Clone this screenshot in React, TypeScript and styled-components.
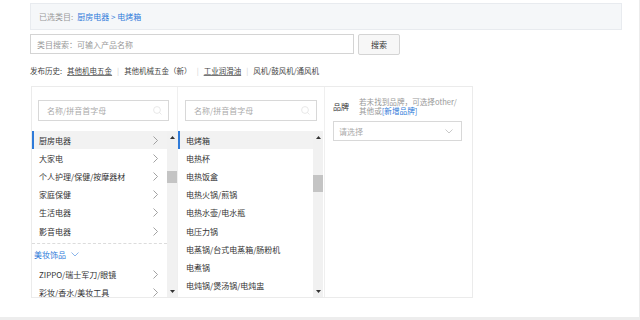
import React from "react";
import styled, { createGlobalStyle } from "styled-components";

const GlobalStyle = createGlobalStyle`
  html, body { margin: 0; padding: 0; background: #fff; }
  body {
    font-family: "Noto Sans CJK SC", "Noto Sans", sans-serif;
    font-size: 8px;
    color: #333;
  }
  * { box-sizing: border-box; }
`;

const Page = styled.div`
  width: 640px;
  height: 320px;
  display: flex;
  flex-direction: column;
  overflow: hidden;
`;

const Main = styled.div`
  flex: 1;
  border-right: 1px solid #ececec;
  padding: 3px 0 0 30px;
  display: flex;
  flex-direction: column;
`;

const FooterStrip = styled.div`
  height: 3px;
  background: #ededed;
`;

const SelectedBar = styled.div`
  width: 592px;
  height: 27px;
  background: #f5f7f9;
  border: 1px solid #e8ebef;
  display: flex;
  align-items: center;
  padding-left: 8px;
  line-height: 1;
`;

const Muted = styled.span`
  color: #999;
  margin-right: 4px;
`;

const Link = styled.span`
  color: #2f7bd9;
`;

const SearchRow = styled.div`
  margin-top: 4px;
  display: flex;
  gap: 4px;
  align-items: flex-start;
`;

const SearchInput = styled.div`
  width: 324px;
  height: 20px;
  border: 1px solid #d4d4d4;
  color: #999;
  display: flex;
  align-items: center;
  padding-left: 6px;
`;

const SearchButton = styled.div`
  width: 42px;
  height: 21px;
  border: 1px solid #d4d4d4;
  border-radius: 2px;
  background: #f7f7f7;
  display: flex;
  align-items: center;
  justify-content: center;
  color: #333;
`;

const HistoryRow = styled.div`
  margin-top: 8px;
  height: 14px;
  display: flex;
  align-items: center;
  white-space: nowrap;
  color: #444;
  font-size: 7.5px;
`;

const HistoryLabel = styled.span`
  margin-right: 5px;
`;

const HistoryItem = styled.span<{ $underline?: boolean }>`
  text-decoration: ${(p) => (p.$underline ? "underline" : "none")};
  text-decoration-color: #777;
`;

const Sep = styled.span`
  color: #d0d0d0;
  margin: 0 5px;
`;

const Panel = styled.div`
  margin-top: 9px;
  margin-left: 1px;
  width: 442px;
  height: 212px;
  border: 1px solid #ebebeb;
  display: flex;
`;

const Column = styled.div<{ $width?: number }>`
  width: ${(p) => (p.$width ? `${p.$width}px` : "auto")};
  flex: ${(p) => (p.$width ? "none" : "1")};
  border-right: ${(p) => (p.$width ? "1px solid #efefef" : "none")};
  display: flex;
  flex-direction: column;
  overflow: hidden;
`;

const FilterBox = styled.div<{ $left: number; $width: number }>`
  margin: 13px 0 0 ${(p) => p.$left}px;
  width: ${(p) => p.$width}px;
  height: 21px;
  border: 1px solid #d8d8d8;
  display: flex;
  align-items: center;
  justify-content: space-between;
  padding: 0 6px 0 8px;
  color: #aaa;
`;

const ListArea = styled.div`
  margin-top: 10px;
  flex: 1;
  display: flex;
  overflow: hidden;
`;

const List = styled.div`
  width: 135px;
  display: flex;
  flex-direction: column;
  overflow: hidden;
`;

const Row = styled.div<{ $active?: boolean; $pad: number }>`
  flex: none;
  height: 18.2px;
  display: flex;
  align-items: center;
  justify-content: space-between;
  padding: 0 9px 0 ${(p) => p.$pad}px;
  white-space: nowrap;
  background: ${(p) => (p.$active ? "#f2f2f2" : "#fff")};
  border-left: 2px solid ${(p) => (p.$active ? "#2f7bd9" : "transparent")};
  color: #333;
`;

const DashedSep = styled.div`
  flex: none;
  margin-top: 3px;
  border-top: 1px dashed #dcdcdc;
`;

const GroupHeader = styled.div`
  flex: none;
  height: 21px;
  display: flex;
  align-items: center;
  gap: 5px;
  padding-left: 2px;
  color: #2f7bd9;
`;

const Scrollbar = styled.div`
  width: 10px;
  background: #f1f1f1;
  display: flex;
  flex-direction: column;
  align-items: center;
`;

const ArrowCell = styled.div`
  height: 12px;
  width: 10px;
  display: flex;
  align-items: center;
  justify-content: center;
`;

const Thumb = styled.div<{ $top: number; $height: number }>`
  margin-top: ${(p) => p.$top}px;
  width: 10px;
  height: ${(p) => p.$height}px;
  background: #c4c4c4;
`;

const Spacer = styled.div`
  flex: 1;
`;

const BrandArea = styled.div`
  padding: 11px 0 0 8px;
  display: flex;
  flex-direction: column;
`;

const BrandHead = styled.div`
  display: flex;
  align-items: flex-start;
`;

const BrandLabel = styled.span`
  color: #333;
  margin-top: 3px;
  width: 26px;
`;

const BrandNote = styled.div`
  display: flex;
  flex-direction: column;
  color: #999;
  font-size: 7.6px;
  white-space: nowrap;
`;

const NoteLine = styled.div`
  height: 8.5px;
  line-height: 8.5px;
  display: flex;
  align-items: center;
`;

const SelectBox = styled.div`
  margin-top: 6px;
  width: 129px;
  height: 20px;
  border: 1px solid #d8d8d8;
  display: flex;
  align-items: center;
  justify-content: space-between;
  padding: 0 8px 0 5px;
  color: #aaa;
`;

const Chevron = () => (
  <svg width="5" height="9" viewBox="0 0 5 9">
    <polyline points="0.5,0.5 4.5,4.5 0.5,8.5" fill="none" stroke="#8a8a8a" strokeWidth="0.8" />
  </svg>
);

const ChevronDown = ({ color = "#bbb" }: { color?: string }) => (
  <svg width="8" height="5" viewBox="0 0 8 5">
    <polyline points="0.5,0.5 4,4 7.5,0.5" fill="none" stroke={color} strokeWidth="0.8" />
  </svg>
);

const SearchIcon = () => (
  <svg width="9" height="9" viewBox="0 0 9 9">
    <circle cx="4" cy="4" r="3.4" fill="none" stroke="#e2e2e2" strokeWidth="0.8" />
    <line x1="6.5" y1="6.5" x2="8.5" y2="8.5" stroke="#e2e2e2" strokeWidth="0.8" />
  </svg>
);

const TriUp = () => (
  <svg width="5" height="3" viewBox="0 0 5 3">
    <polygon points="0,3 2.5,0 5,3" fill="#333" />
  </svg>
);

const TriDown = () => (
  <svg width="5" height="3" viewBox="0 0 5 3">
    <polygon points="0,0 5,0 2.5,3" fill="#333" />
  </svg>
);

const ScrollTrack = ({ top, height }: { top: number; height: number }) => (
  <Scrollbar>
    <ArrowCell>
      <TriUp />
    </ArrowCell>
    <Thumb $top={top} $height={height} />
    <Spacer />
    <ArrowCell>
      <TriDown />
    </ArrowCell>
  </Scrollbar>
);

const col1Top = ["厨房电器", "大家电", "个人护理/保健/按摩器材", "家庭保健", "生活电器", "影音电器"];
const col1Group = ["ZIPPO/瑞士军刀/眼镜", "彩妆/香水/美妆工具"];
const col2 = [
  "电烤箱",
  "电热杯",
  "电热饭盒",
  "电热火锅/煎锅",
  "电热水壶/电水瓶",
  "电压力锅",
  "电蒸锅/台式电蒸箱/肠粉机",
  "电煮锅",
  "电炖锅/煲汤锅/电炖盅",
];

export default function App() {
  return (
    <Page>
      <GlobalStyle />
      <Main>
        <SelectedBar>
          <Muted>已选类目:</Muted>
          <Link>厨房电器 &gt; 电烤箱</Link>
        </SelectedBar>
        <SearchRow>
          <SearchInput>类目搜索：可输入产品名称</SearchInput>
          <SearchButton>搜索</SearchButton>
        </SearchRow>
        <HistoryRow>
          <HistoryLabel>发布历史:</HistoryLabel>
          <HistoryItem $underline>其他机电五金</HistoryItem>
          <Sep>|</Sep>
          <HistoryItem>其他机械五金（新）</HistoryItem>
          <Sep>|</Sep>
          <HistoryItem $underline>工业润滑油</HistoryItem>
          <Sep>|</Sep>
          <HistoryItem>风机/鼓风机/通风机</HistoryItem>
        </HistoryRow>
        <Panel>
          <Column $width={146}>
            <FilterBox $left={6} $width={131}>
              <span>名称/拼音首字母</span>
              <SearchIcon />
            </FilterBox>
            <ListArea>
              <List>
                {col1Top.map((t, i) => (
                  <Row key={t} $active={i === 0} $pad={5}>
                    <span>{t}</span>
                    <Chevron />
                  </Row>
                ))}
                <DashedSep />
                <GroupHeader>
                  <span>美妆饰品</span>
                  <ChevronDown color="#6fa3e6" />
                </GroupHeader>
                {col1Group.map((t) => (
                  <Row key={t} $pad={5}>
                    <span>{t}</span>
                    <Chevron />
                  </Row>
                ))}
              </List>
              <ScrollTrack top={28} height={12} />
            </ListArea>
          </Column>
          <Column $width={147}>
            <FilterBox $left={7} $width={132}>
              <span>名称/拼音首字母</span>
              <SearchIcon />
            </FilterBox>
            <ListArea>
              <List>
                {col2.map((t, i) => (
                  <Row key={t} $active={i === 0} $pad={6}>
                    <span>{t}</span>
                  </Row>
                ))}
              </List>
              <ScrollTrack top={32} height={17} />
            </ListArea>
          </Column>
          <Column>
            <BrandArea>
              <BrandHead>
                <BrandLabel>品牌</BrandLabel>
                <BrandNote>
                  <NoteLine>若未找到品牌，可选择other/</NoteLine>
                  <NoteLine>
                    其他或<Link>[新增品牌]</Link>
                  </NoteLine>
                </BrandNote>
              </BrandHead>
              <SelectBox>
                <span>请选择</span>
                <ChevronDown />
              </SelectBox>
            </BrandArea>
          </Column>
        </Panel>
      </Main>
      <FooterStrip />
    </Page>
  );
}
